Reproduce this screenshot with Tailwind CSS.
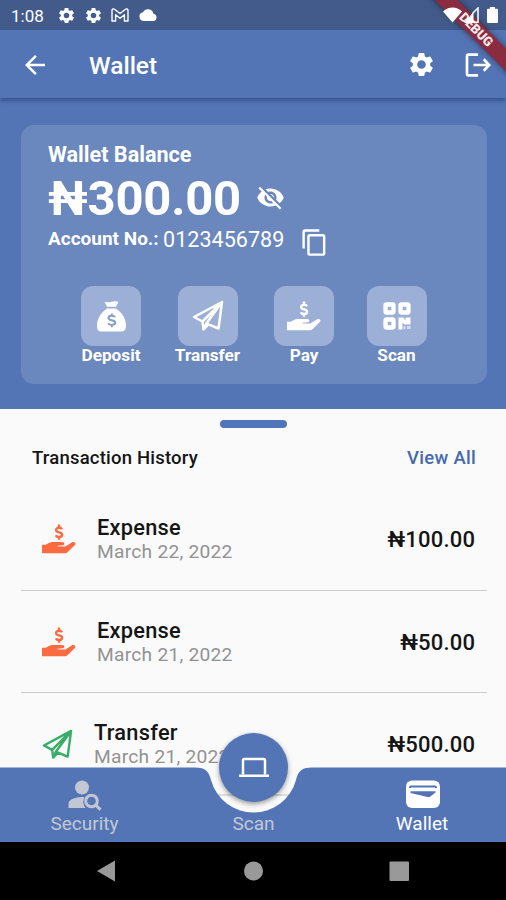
<!DOCTYPE html>
<html lang="en">
<head>
<meta charset="utf-8">
<title>Wallet</title>
<script src="https://cdn.jsdelivr.net/npm/@tailwindcss/browser@4"></script>
</head>
<body class="w-[506px] h-[900px] overflow-hidden bg-[#fafafa] font-[Roboto,sans-serif] whitespace-nowrap">
<svg class="hidden">
  <symbol id="gear" viewBox="0 0 24 24"><path d="M19.14 12.94c.04-.3.06-.61.06-.94 0-.32-.02-.64-.07-.94l2.03-1.58c.18-.14.23-.41.12-.61l-1.92-3.32c-.12-.22-.37-.29-.59-.22l-2.39.96c-.5-.38-1.03-.7-1.62-.94l-.36-2.54c-.04-.24-.24-.41-.48-.41h-3.84c-.24 0-.43.17-.47.41l-.36 2.54c-.59.24-1.13.57-1.62.94l-2.39-.96c-.22-.08-.47 0-.59.22L2.74 8.87c-.12.21-.08.47.12.61l2.03 1.58c-.05.3-.09.63-.09.94s.02.64.07.94l-2.03 1.58c-.18.14-.23.41-.12.61l1.92 3.32c.12.22.37.29.59.22l2.39-.96c.5.38 1.03.7 1.62.94l.36 2.54c.05.24.24.41.48.41h3.84c.24 0 .44-.17.47-.41l.36-2.54c.59-.24 1.13-.56 1.62-.94l2.39.96c.22.08.47 0 .59-.22l1.92-3.32c.12-.22.07-.47-.12-.61l-2.01-1.58zM12 15.6c-1.98 0-3.6-1.62-3.6-3.6s1.62-3.6 3.6-3.6 3.6 1.62 3.6 3.6-1.62 3.6-3.6 3.6z"/></symbol>
  <symbol id="hand" viewBox="0 0 34 31"><path d="M0 20.800h3.800l3.600-2c1-.6 1.800-.8 3-.8h10c2.400 0 2.600 3.100.2 3.300l-5 .4v.8h7.800l6.300-4.100c2.400-1.500 4.900.6 3.200 2.600l-7.400 7.200c-.8.800-1.600 1.100-2.700 1.100H0z"/><path fill="none" stroke="currentColor" stroke-width="2.400" d="M20 5.300c-.6-1.100-1.600-1.500-2.900-1.500-1.800 0-3 .8-3 2.200 0 3.200 6 1.500 6 4.700 0 1.500-1.200 2.300-3.100 2.300-1.600 0-2.700-.6-3.200-1.800M17 .5v3.300M17 13v2.700"/></symbol>
  <symbol id="plane" viewBox="0 0 32 32"><path fill="none" stroke="currentColor" stroke-width="2.500" stroke-linejoin="round" stroke-linecap="round" d="M30 2 2 17l8.500 4.500 1 8 5-5.200L26.500 28.500zM30 2 10.500 21.500M30 2 14.500 23.300l-3 6.200M14.500 23.300l2 1"/></symbol>
</svg>

<div class="relative w-[506px] h-[900px] flex flex-col">
  <div class="h-[30px] shrink-0 bg-[#425b8a] flex items-center pl-[11px] pr-[8px] text-white">
    <span class="text-[17px] leading-[30px] pt-[2px] w-[46px]">1:08</span>
    <svg class="size-[19px] fill-white"><use href="#gear"/></svg>
    <svg class="size-[19px] fill-white ml-[8px]"><use href="#gear"/></svg>
    <svg class="w-[18px] h-[14px] ml-[8px]" viewBox="0 0 18 14" fill="none" stroke="#fff" stroke-width="1.400" stroke-linejoin="round"><path d="M1 13V2.500C1 .8 2.600.6 3.500 1.300L9 5.500l5.500-4.200C15.400.6 17 .8 17 2.500V13h-3.600V6.800L9 10.200 4.600 6.800V13z"/></svg>
    <svg class="w-[18px] h-[12px] ml-[10px] fill-white" viewBox="0 0 18 12"><path d="M14.500 4.700A5.600 5.600 0 0 0 4 3.300 4.400 4.400 0 0 0 4.500 12h9.800a3.700 3.700 0 0 0 .2-7.300z"/></svg>
    <div class="relative z-30 ml-auto flex items-center">
      <svg class="w-[19px] h-[16px] fill-white" viewBox="0 0 20 16"><path d="M0 4.300C5.500-1.300 14.500-1.300 20 4.300L10 16z"/></svg>
      <svg class="w-[15px] h-[16px] ml-[2px]" viewBox="0 0 15 16"><path fill="#fff" d="M0 16 9.500 5v11z"/><path fill="none" stroke="#fff" stroke-width="1.500" d="M8.500 6.500 14 1v14.200H8.500"/></svg>
      <svg class="w-[11px] h-[16px] ml-[8px] fill-white" viewBox="0 0 11 16"><path d="M3 0h5v1.800h2a1 1 0 0 1 1 1V15a1 1 0 0 1-1 1H1a1 1 0 0 1-1-1V2.800a1 1 0 0 1 1-1h2z"/></svg>
    </div>
  </div>

  <div class="relative z-10 h-[68px] shrink-0 bg-[#5475b5] shadow-[0_3px_4px_rgba(20,40,90,0.42)] flex items-center pl-[20px] pr-[15px] text-white">
    <svg class="size-[30px] fill-white mt-px" viewBox="0 0 24 24"><path d="M20 11H7.830l5.590-5.590L12 4l-8 8 8 8 1.410-1.410L7.830 13H20v-2z"/></svg>
    <h1 class="ml-[39px] pt-[4px] text-[24.500px] font-medium">Wallet</h1>
    <svg class="size-[29px] fill-white ml-auto mt-px" viewBox="0 0 24 24"><use href="#gear"/></svg>
    <svg class="w-[26px] h-[24px] ml-[29px] mt-px" viewBox="0 0 26 24" fill="none" stroke="#fff" stroke-width="2.700"><path d="M13 1.700H3.500Q2 1.700 2 3.200v17.600q0 1.500 1.500 1.500H13M8.500 12H24M18.700 6.200l5.500 5.800-5.500 5.800"/></svg>
  </div>

  <section class="h-[311px] shrink-0 bg-[#5475b5] pt-[27px] px-[21px]">
    <div class="w-[466px] h-[259px] rounded-[13px] bg-[#6a87be] text-white pl-[27px] pt-[17px]">
      <div class="h-[26px] leading-[26px] text-[21.600px] font-bold">Wallet Balance</div>
      <div class="h-[58px] flex items-center">
        <span class="w-[208px] text-[49px] leading-[58px] font-bold pt-[3px] tracking-[-0.250px]">₦300.00</span>
        <svg class="size-[29px] fill-white mt-[1px]" viewBox="0 0 24 24"><path d="M12 7c2.760 0 5 2.240 5 5 0 .65-.13 1.260-.36 1.830l2.920 2.920c1.510-1.260 2.700-2.890 3.430-4.750-1.730-4.390-6-7.500-11-7.500-1.400 0-2.740.25-3.980.7l2.160 2.160C10.740 7.130 11.350 7 12 7zM2 4.270l2.280 2.280.46.46C3.080 8.300 1.780 10.020 1 12c1.730 4.390 6 7.500 11 7.500 1.550 0 3.030-.3 4.380-.84l.42.42L19.730 22 21 20.730 3.270 3 2 4.270zM7.530 9.800l1.550 1.550c-.05.21-.08.43-.08.65 0 1.660 1.340 3 3 3 .22 0 .44-.03.65-.08l1.550 1.550c-.67.33-1.410.53-2.200.53-2.760 0-5-2.240-5-5 0-.79.2-1.530.53-2.200zm4.310-.78 3.150 3.150.02-.16c0-1.660-1.340-3-3-3l-.17.01z"/></svg>
      </div>
      <div class="h-[32px] flex">
        <span class="w-[115px] text-[19px] leading-[25px] font-bold">Account No.:</span>
        <span class="w-[137px] text-[21.500px] leading-[28px] tracking-[0.050px]">0123456789</span>
        <svg class="size-[29px] fill-white mt-[2px]" viewBox="0 0 24 24"><path d="M16 1H4c-1.100 0-2 .9-2 2v14h2V3h12V1zm3 4H8c-1.100 0-2 .9-2 2v14c0 1.100.9 2 2 2h11c1.100 0 2-.9 2-2V7c0-1.100-.9-2-2-2zm0 16H8V7h11v14z"/></svg>
      </div>
      <div class="mt-[28px] flex text-[17.200px] font-bold leading-[19px]">
        <div class="w-[126px] flex flex-col items-center"><div class="size-[60px] rounded-[12px] bg-[#9bafd7] flex items-center justify-center">
          <svg class="w-[31px] h-[31px]" viewBox="0 0 31 31"><path fill="#fff" d="M8.500.8q3.500 1 7 0t7 0L20 5.700h-9zM11 7.500h9c5 3.500 10 9 10 17 0 4-1.500 6-4.500 6h-20C2 30.500 1 28.500 1 24.500c0-8 5-13.500 10-17z"/><path fill="none" stroke="#849dcb" stroke-width="2" d="M19 16.200c-.6-1.100-1.800-1.500-3.300-1.500-2 0-3.200.8-3.200 2.200 0 3.200 6.700 1.500 6.700 4.700 0 1.500-1.400 2.300-3.400 2.300-1.700 0-3-.6-3.500-1.800M15.800 12.500v2M15.800 24v2.300"/></svg></div><span>Deposit</span></div>
        <div class="w-[67px] flex flex-col items-center"><div class="size-[60px] rounded-[12px] bg-[#9bafd7] flex items-center justify-center text-white"><svg class="size-[32px]"><use href="#plane"/></svg></div><span>Transfer</span></div>
        <div class="w-[126px] flex flex-col items-center"><div class="size-[60px] rounded-[12px] bg-[#9bafd7] flex items-center justify-center text-white"><svg class="w-[34px] h-[31px] fill-white"><use href="#hand"/></svg></div><span>Pay</span></div>
        <div class="w-[59px] flex flex-col items-center"><div class="size-[60px] rounded-[12px] bg-[#9bafd7] flex items-center justify-center">
          <svg class="size-[28px]" viewBox="0 0 28 28"><g fill="none" stroke="#fff" stroke-width="4.300"><rect x="2.500" y="2.500" width="8" height="8" rx="1"/><rect x="17.500" y="2.500" width="8" height="8" rx="1"/><rect x="2.500" y="17.500" width="8" height="8" rx="1"/></g><path fill="#fff" d="M15.500 15.500h5l2 3v-3h5v7h-6l-2-2v7h-4z"/><path fill="#fff" opacity=".6" d="M20.500 24h2v3h-2zM24 24h3.500v3H24z"/></svg></div><span>Scan</span></div>
      </div>
    </div>
  </section>

  <main class="h-[358.500px] shrink-0 overflow-hidden bg-[#fafafa] pt-[11px] pl-[21px] pr-[19px] text-[#151515]">
    <div class="ml-[199px] w-[67px] h-[8px] rounded-full bg-[#5075b9]"></div>
    <div class="mt-[17px] h-[28px] pl-[11px] pr-[11px] flex items-center justify-between font-medium text-[18.500px] tracking-[0.200px]"><h2>Transaction History</h2><a class="text-[#4669ad] tracking-[0.300px]">View All</a></div>
    <div class="mt-[15px] h-[102.500px] border-b-[1.500px] border-[#cbcbcb] flex items-center pl-[20.500px] pr-[12px]">
      <svg class="w-[34px] h-[31px] fill-[#fb6b42] text-[#fb6b42] mt-[2px]"><use href="#hand"/></svg>
      <div class="ml-[21.500px] pt-[2px]"><div class="text-[21.800px] leading-[25px] font-medium tracking-[0.250px]">Expense</div><div class="text-[19.200px] leading-[24px] text-[#929292] tracking-[0.250px]">March 22, 2022</div></div>
      <span class="ml-auto pt-[1.500px] text-[22px] font-medium tracking-[0.200px] -mr-[0.200px]">₦100.00</span>
    </div>
    <div class="h-[102.500px] border-b-[1.500px] border-[#cbcbcb] flex items-center pl-[20.500px] pr-[12px]">
      <svg class="w-[34px] h-[31px] fill-[#fb6b42] text-[#fb6b42] mt-[2px]"><use href="#hand"/></svg>
      <div class="ml-[21.500px] pt-[2px]"><div class="text-[21.800px] leading-[25px] font-medium tracking-[0.250px]">Expense</div><div class="text-[19.200px] leading-[24px] text-[#929292] tracking-[0.250px]">March 21, 2022</div></div>
      <span class="ml-auto pt-[1.500px] text-[22px] font-medium tracking-[0.200px] -mr-[0.200px]">₦50.00</span>
    </div>
    <div class="h-[102.500px] flex items-center pl-[21px] pr-[12px]">
      <svg class="size-[31px] text-[#38ac68]"><use href="#plane"/></svg>
      <div class="ml-[21px] pt-px"><div class="text-[21.800px] leading-[25px] font-medium tracking-[0.250px]">Transfer</div><div class="text-[19.200px] leading-[24px] text-[#929292] tracking-[0.250px]">March 21, 2022</div></div>
      <span class="ml-auto text-[22px] font-medium tracking-[0.200px] -mr-[0.200px]">₦500.00</span>
    </div>
  </main>

  <nav class="relative h-[74.500px] shrink-0 flex text-[19px] text-[#c2c7d3] bg-[#fafafa]">
    <svg class="absolute left-0 top-[-0.500px] w-[506px] h-[75px]" viewBox="0 0 506 75"><path d="M209 28H298" stroke="#d4d4d4" stroke-width="1.500"/><path fill="#5475b5" d="M0 .5H195C206 .5 209 5 211 13A44 44 0 0 0 296 13C298 5 301 .5 312 .5H506V75H0z"/></svg>
    <div class="relative w-[169px] flex flex-col items-center pt-[12px]">
      <svg class="w-[34px] h-[31px]" viewBox="0 0 34 31"><g fill="#c2c7d3"><circle cx="14" cy="7.500" r="7"/><path d="M.5 28v-4C.5 20 5 17.500 13.500 17c1.200 0 2.200 0 3 .2-1.800 3.800-1.400 7.500 1 10.800z"/></g><g fill="none" stroke="#c2c7d3" stroke-width="3"><circle cx="23.500" cy="21" r="5.800"/><path d="m27.500 25 5 4.700"/></g></svg>
      <span class="leading-[25px]">Security</span>
    </div>
    <div class="relative w-[169px] flex flex-col items-center pt-[43px]"><span class="leading-[25px]">Scan</span></div>
    <div class="relative w-[168px] flex flex-col items-center pt-[12px] text-white">
      <svg class="w-[34px] h-[31px] ml-[2px]" viewBox="0 0 34 31"><rect y=".5" width="34" height="27.500" rx="6" fill="#fff"/><path fill="none" stroke="#5475b5" stroke-width="2" d="M4 8V7.500Q4 6.500 5 6.500H29Q30 6.500 30 7.500V8"/><path fill="#5475b5" d="M4.500 11.300H29.500V12.500L24 16.700q-1 .7-2.500.3L4.500 13z"/></svg>
      <span class="leading-[25px]">Wallet</span>
    </div>
  </nav>
  <div class="absolute left-[219px] top-[733px] size-[69px] rounded-full bg-[#5475b5] shadow-[0_2px_5px_rgba(0,0,0,0.4)] flex items-center justify-center">
    <svg class="w-[32px] h-[22px]" viewBox="0 0 32 22"><path fill="none" stroke="#fff" stroke-width="2.500" d="M5 17.500V3.500Q5 2 6.500 2h19Q27 2 27 3.500V17.500"/><path fill="#fff" d="M1 17.500h30V20H1z"/></svg>
  </div>

  <div class="relative h-[58px] shrink-0 bg-black">
    <svg class="absolute inset-0 w-[506px] h-[58px]" viewBox="0 0 506 58" fill="#999"><path d="M97 29 115 18.500V39.500z"/><circle cx="253.500" cy="29" r="9.500"/><rect x="389.500" y="19.500" width="19.500" height="19.500" rx="1"/></svg>
  </div>

  <div class="absolute right-0 top-0 z-20 w-[80px] h-[80px] overflow-hidden">
    <div class="absolute left-[-15px] top-[21.500px] w-[130px] h-[16px] rotate-45 bg-[#8a2b40] shadow-[0_0_6px_rgba(0,0,0,0.5)] text-center text-[13px] leading-[16px] font-black text-white/90">DEBUG</div>
  </div>
</div>
</body>
</html>
